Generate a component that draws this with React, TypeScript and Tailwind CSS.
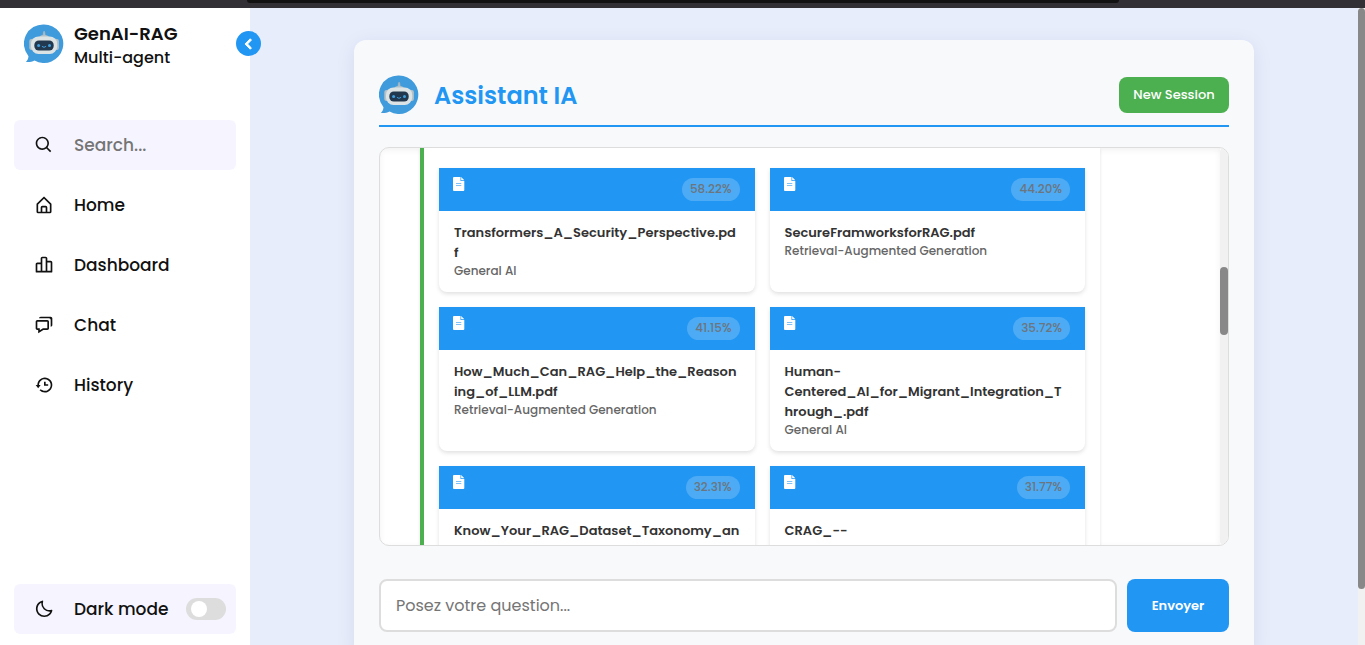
import { BiSearch, BiBarChartAlt2, BiChat, BiHistory, BiMoon, BiChevronLeft } from "react-icons/bi";
import type { ComponentType } from "react";

type Source = { score: string; title: string; topic: string };

const sources: Source[] = [
  { score: "58.22%", title: "Transformers_A_Security_Perspective.pd\nf", topic: "General AI" },
  { score: "44.20%", title: "SecureFramworksforRAG.pdf", topic: "Retrieval-Augmented Generation" },
  { score: "41.15%", title: "How_Much_Can_RAG_Help_the_Reason\ning_of_LLM.pdf", topic: "Retrieval-Augmented Generation" },
  { score: "35.72%", title: "Human-\nCentered_AI_for_Migrant_Integration_T\nhrough_.pdf", topic: "General AI" },
  { score: "32.31%", title: "Know_Your_RAG_Dataset_Taxonomy_an", topic: "" },
  { score: "31.77%", title: "CRAG_--", topic: "" },
];

function HomeIcon() {
  return (
    <svg viewBox="0 0 24 24" width="1em" height="1em" fill="currentColor" aria-hidden="true">
      <path d="M5 22h14a2 2 0 0 0 2-2v-9a1 1 0 0 0-.29-.71l-8-8a1 1 0 0 0-1.41 0l-8 8A1 1 0 0 0 3 11v9a2 2 0 0 0 2 2zm5-2v-5h4v5zm-5-8.590 7-7 7 7V20h-3v-5a2 2 0 0 0-2-2h-4a2 2 0 0 0-2 2v5H5z" />
    </svg>
  );
}

const links: { label: string; icon: ComponentType }[] = [
  { label: "Home", icon: HomeIcon },
  { label: "Dashboard", icon: BiBarChartAlt2 },
  { label: "Chat", icon: BiChat },
  { label: "History", icon: BiHistory },
];

function RobotLogo() {
  return (
    <svg viewBox="0 0 40 40" className="size-10 shrink-0" aria-hidden="true">
      <path d="M20 .4a19.300 19.300 0 1 1-9.500 36.100c-2.600 1.300-5.400 1.700-8.600 1.400 1.500-1.500 2.400-3.300 2.600-5.700A19.300 19.300 0 0 1 20 .4Z" fill="#3f9bdc" />
      <path d="M19.500 8q.6-1.600 1.200 0l.5 3.500h-2.200Z" fill="#aebbc2" stroke="#aebbc2" strokeWidth=".6" />
      <path d="M14.800 13.200q1.500-2.500 5.300-2.500t5.300 2.500Z" fill="#b4c2c9" />
      <rect x="5.300" y="15" width="5" height="11" rx="2" fill="#b5c1c7" />
      <rect x="29.900" y="15" width="5" height="11" rx="2" fill="#b5c1c7" />
      <rect x="7" y="12.400" width="26.200" height="17.500" rx="7.500" fill="#dce3e5" />
      <rect x="10.300" y="16.400" width="19.400" height="10.200" rx="4.500" fill="#22384f" />
      <circle cx="14.600" cy="21.500" r="1.500" fill="#3fa0e0" />
      <circle cx="25.500" cy="21.500" r="1.500" fill="#3fa0e0" />
      <path d="M18.200 22.600q1.800 1.800 3.600 0" fill="none" stroke="#3fa0e0" strokeWidth="1" strokeLinecap="round" />
    </svg>
  );
}

function FileIcon() {
  return (
    <svg viewBox="0 0 12 14" className="h-3.5 w-3" aria-hidden="true">
      <path d="M1 0h6.500v4H11.300v9a1 1 0 0 1-1 1H1a1 1 0 0 1-1-1V1a1 1 0 0 1 1-1Z" fill="#fff" />
      <path d="M8.200 0l3.100 3.300H8.200Z" fill="#fff" />
      <path d="M3 6.500h5.300M3 8.500h5.300" stroke="#2196f3" strokeOpacity=".65" strokeWidth=".9" />
    </svg>
  );
}

function SourceCard({ score, title, topic }: Source) {
  return (
    <article className="overflow-hidden rounded-b-lg bg-white shadow-[0_2px_4px_rgba(0,0,0,0.12)]">
      <div className="flex h-[43px] items-start justify-between bg-[#2196f3] pt-[9px] pr-[15px] pb-2.5 pl-3.5">
        <FileIcon />
        <span className="self-end rounded-full bg-white/20 px-2 pb-0.5 text-xs leading-[21px] font-medium text-[#6c757d]">{score}</span>
      </div>
      <div className="px-[15px] pt-3 pb-[13px]">
        <h3 className="text-[13px] leading-5 font-semibold whitespace-pre-line text-[#333]">{title}</h3>
        <p className="text-xs leading-4 font-medium text-[#666]">{topic}</p>
      </div>
    </article>
  );
}

function Sidebar() {
  return (
    <aside className="relative flex w-[250px] shrink-0 flex-col bg-white px-3.5 pt-2.5 pb-[11px] text-[17px] font-medium text-[#111]">
      <div className="flex h-[54px] items-start gap-2.5 pt-1.5 pl-2.5">
        <RobotLogo />
        <div className="-mt-0.5">
          <p className="text-lg leading-6 font-semibold">GenAI-RAG</p>
          <p className="text-base leading-6">Multi-agent</p>
        </div>
      </div>
      <button aria-label="Collapse menu" className="absolute top-[23px] -right-[11px] flex size-[25px] items-center justify-center rounded-full bg-[#2196f3] text-[22px] text-white">
        <BiChevronLeft strokeWidth="1" />
      </button>
      <label className="mt-12 flex h-[50px] items-center rounded-md bg-[#f6f5ff]">
        <span className="flex w-[60px] justify-center text-xl"><BiSearch /></span>
        <input type="search" aria-label="Search" placeholder="Search..." className="w-0 flex-1 pt-0.5 outline-none placeholder:text-[#757575]" />
      </label>
      <nav className="mt-2.5 flex flex-col gap-2.5">
        {links.map(({ label, icon: Icon }) => (
          <a key={label} href="#" className="flex h-[50px] items-center rounded-md">
            <span className="flex w-[60px] justify-center text-xl"><Icon /></span>
            <span className="pt-0.5">{label}</span>
          </a>
        ))}
      </nav>
      <label className="mt-auto flex h-[50px] items-center rounded-md bg-[#f6f5ff] pr-2.5">
        <span className="flex w-[60px] justify-center text-xl"><BiMoon /></span>
        <span className="flex-1 pt-0.5">Dark mode</span>
        <input type="checkbox" className="h-[22px] w-10 appearance-none rounded-full bg-[#ddd] p-[3px] before:ml-0.5 before:block before:size-4 before:rounded-full before:bg-white" />
      </label>
    </aside>
  );
}

export default function App() {
  return (
    <div className="flex h-screen flex-col overflow-hidden bg-[#e7edfb] font-[Poppins,Inter,sans-serif]">
      <div className="h-2 shrink-0 bg-[#322f35] pr-[246px] pl-[247px]">
        <div className="h-[3px] rounded-b-md bg-[#121212]" />
      </div>
      <div className="flex min-h-0 flex-1">
        <Sidebar />
        <main className="flex min-w-0 flex-1 items-start justify-center overflow-hidden pt-8">
          <section className="w-full max-w-[900px] rounded-xl bg-[#f8f9fb] p-[25px] shadow-[0_4px_20px_rgba(0,0,80,0.08)]">
            <header className="flex items-center gap-[15px] border-b-2 border-[#2196f3] py-2.5">
              <RobotLogo />
              <h1 className="flex-1 pt-0.5 text-2xl leading-8 font-semibold text-[#2196f3]">Assistant IA</h1>
              <button className="h-9 w-[110px] rounded-lg bg-[#4caf50] text-[13px] font-medium text-white">New Session</button>
            </header>
            <div className="mt-5 flex h-[399px] overflow-hidden rounded-[10px] border border-[#ddd] bg-white">
              <div className="min-w-0 flex-1 overflow-hidden pr-[120px] pl-10 shadow-[inset_0_2px_6px_rgba(0,0,0,0.06)]">
                <div className="grid grid-cols-2 gap-[15px] border-l-4 border-[#4caf50] bg-white px-[15px] pt-5 pb-10 shadow-[0_1px_3px_rgba(0,0,0,0.12)]">
                  {sources.map((source) => (
                    <SourceCard key={source.title} {...source} />
                  ))}
                </div>
              </div>
              <div className="w-2 rounded-[10px] bg-[#f1f1f1] pt-[119px]">
                <div className="h-[68px] rounded-full bg-[#888]" />
              </div>
            </div>
            <form className="mt-[33px] flex h-[53px] gap-2.5">
              <input type="text" aria-label="Posez votre question" placeholder="Posez votre question..." className="min-w-0 flex-1 rounded-lg border-2 border-[#ddd] bg-white px-[15px] text-base outline-none placeholder:text-[#757575]" />
              <button type="button" className="w-[102px] rounded-lg bg-[#2196f3] text-[13px] font-semibold text-white">Envoyer</button>
            </form>
          </section>
        </main>
        <div className="w-[7px] shrink-0 bg-[#f1f1f1] pb-14">
          <div className="h-full rounded-full bg-[#888]" />
        </div>
      </div>
    </div>
  );
}
